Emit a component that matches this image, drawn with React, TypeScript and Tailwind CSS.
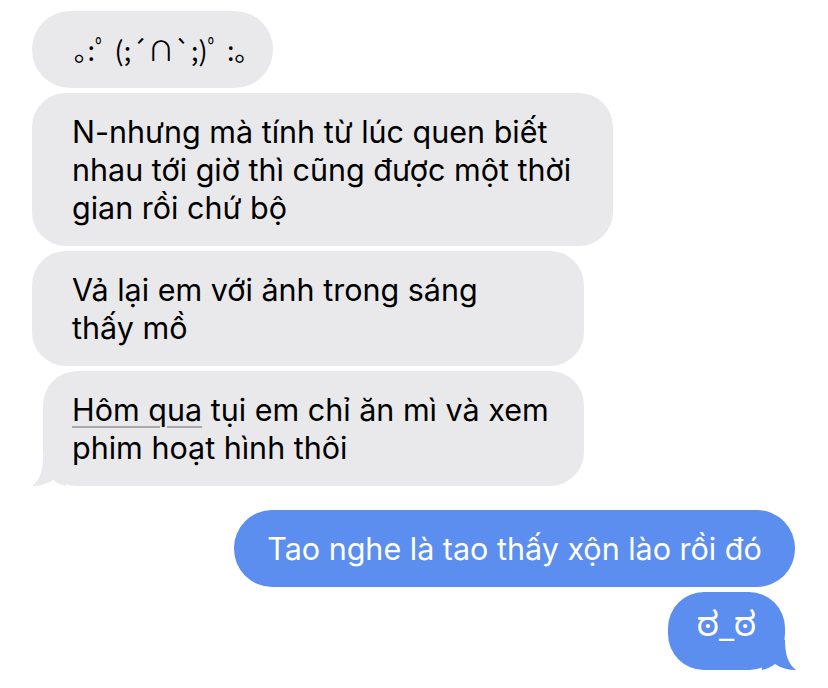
import React from 'react';

const gray = 'bg-[#e9e9eb]';
const blue = 'bg-[#5b8eee]';

function LeftTail() {
  return (
    <svg
      className="absolute bottom-0 left-[-11px]"
      width="34"
      height="30"
      viewBox="0 0 34 30"
      fill="#e9e9eb"
    >
      <path d="M11 0 C11 14 8 24 0 30 C8 30 15 28 21 24 C25 27 29 29 34 30 L34 0 Z" />
    </svg>
  );
}

function RightTail() {
  return (
    <svg
      className="absolute bottom-0 right-[-11px]"
      width="34"
      height="30"
      viewBox="0 0 34 30"
      fill="#5b8eee"
    >
      <path d="M23 0 C23 14 26 24 34 30 C26 30 19 28 13 24 C9 27 5 29 0 30 L0 0 Z" />
    </svg>
  );
}

export default function App() {
  return (
    <main className="h-[688px] w-[828px] overflow-hidden bg-white pt-[11px] font-['Inter','Noto_Sans_CJK_JP',sans-serif] text-[30.5px] leading-[38px]">
      <div className="flex flex-col items-start gap-[5px] pl-8">
        <div className={`${gray} flex h-[77px] w-[241px] items-center rounded-[38px] px-[42px] text-black`}>
          <span className="font-['Noto_Sans_CJK_JP',sans-serif] text-[27px] whitespace-nowrap">
            ｡:ﾟ (;´∩`;)ﾟ :｡
          </span>
        </div>
        <div className={`${gray} w-[581px] rounded-[34px] px-[40px] py-[19.5px] text-black`}>
          N-nhưng mà tính từ lúc quen biết
          <br />
          nhau tới giờ thì cũng được một thời
          <br />
          gian rồi chứ bộ
        </div>
        <div className={`${gray} w-[552px] rounded-[34px] px-[40px] py-[19.5px] text-black`}>
          Vả lại em với ảnh trong sáng
          <br />
          thấy mồ
        </div>
        <div className={`${gray} relative ml-[11px] w-[541px] rounded-[34px] px-[29px] py-[19.5px] text-black`}>
          <LeftTail />
          <span className="relative">
            <span className="underline decoration-[#a8a8ad] decoration-2 underline-offset-[5px]">
              Hôm qua
            </span>{' '}
            tụi em chỉ ăn mì và xem
            <br />
            phim hoạt hình thôi
          </span>
        </div>
      </div>

      <div className="mt-6 flex flex-col items-end gap-[5px] pr-[33px]">
        <div className={`${blue} flex h-[77px] w-[561px] items-center justify-center rounded-[38px] text-white`}>
          Tao nghe là tao thấy xộn lào rồi đó
        </div>
        <div className={`${blue} relative mr-[10px] flex h-[78px] w-[117px] items-center justify-center rounded-[36px] text-white`}>
          <RightTail />
          <span className="relative font-['Noto_Sans_Kannada','DejaVu_Sans',sans-serif] text-[34px]">ಠ_ಠ</span>
        </div>
      </div>
    </main>
  );
}
